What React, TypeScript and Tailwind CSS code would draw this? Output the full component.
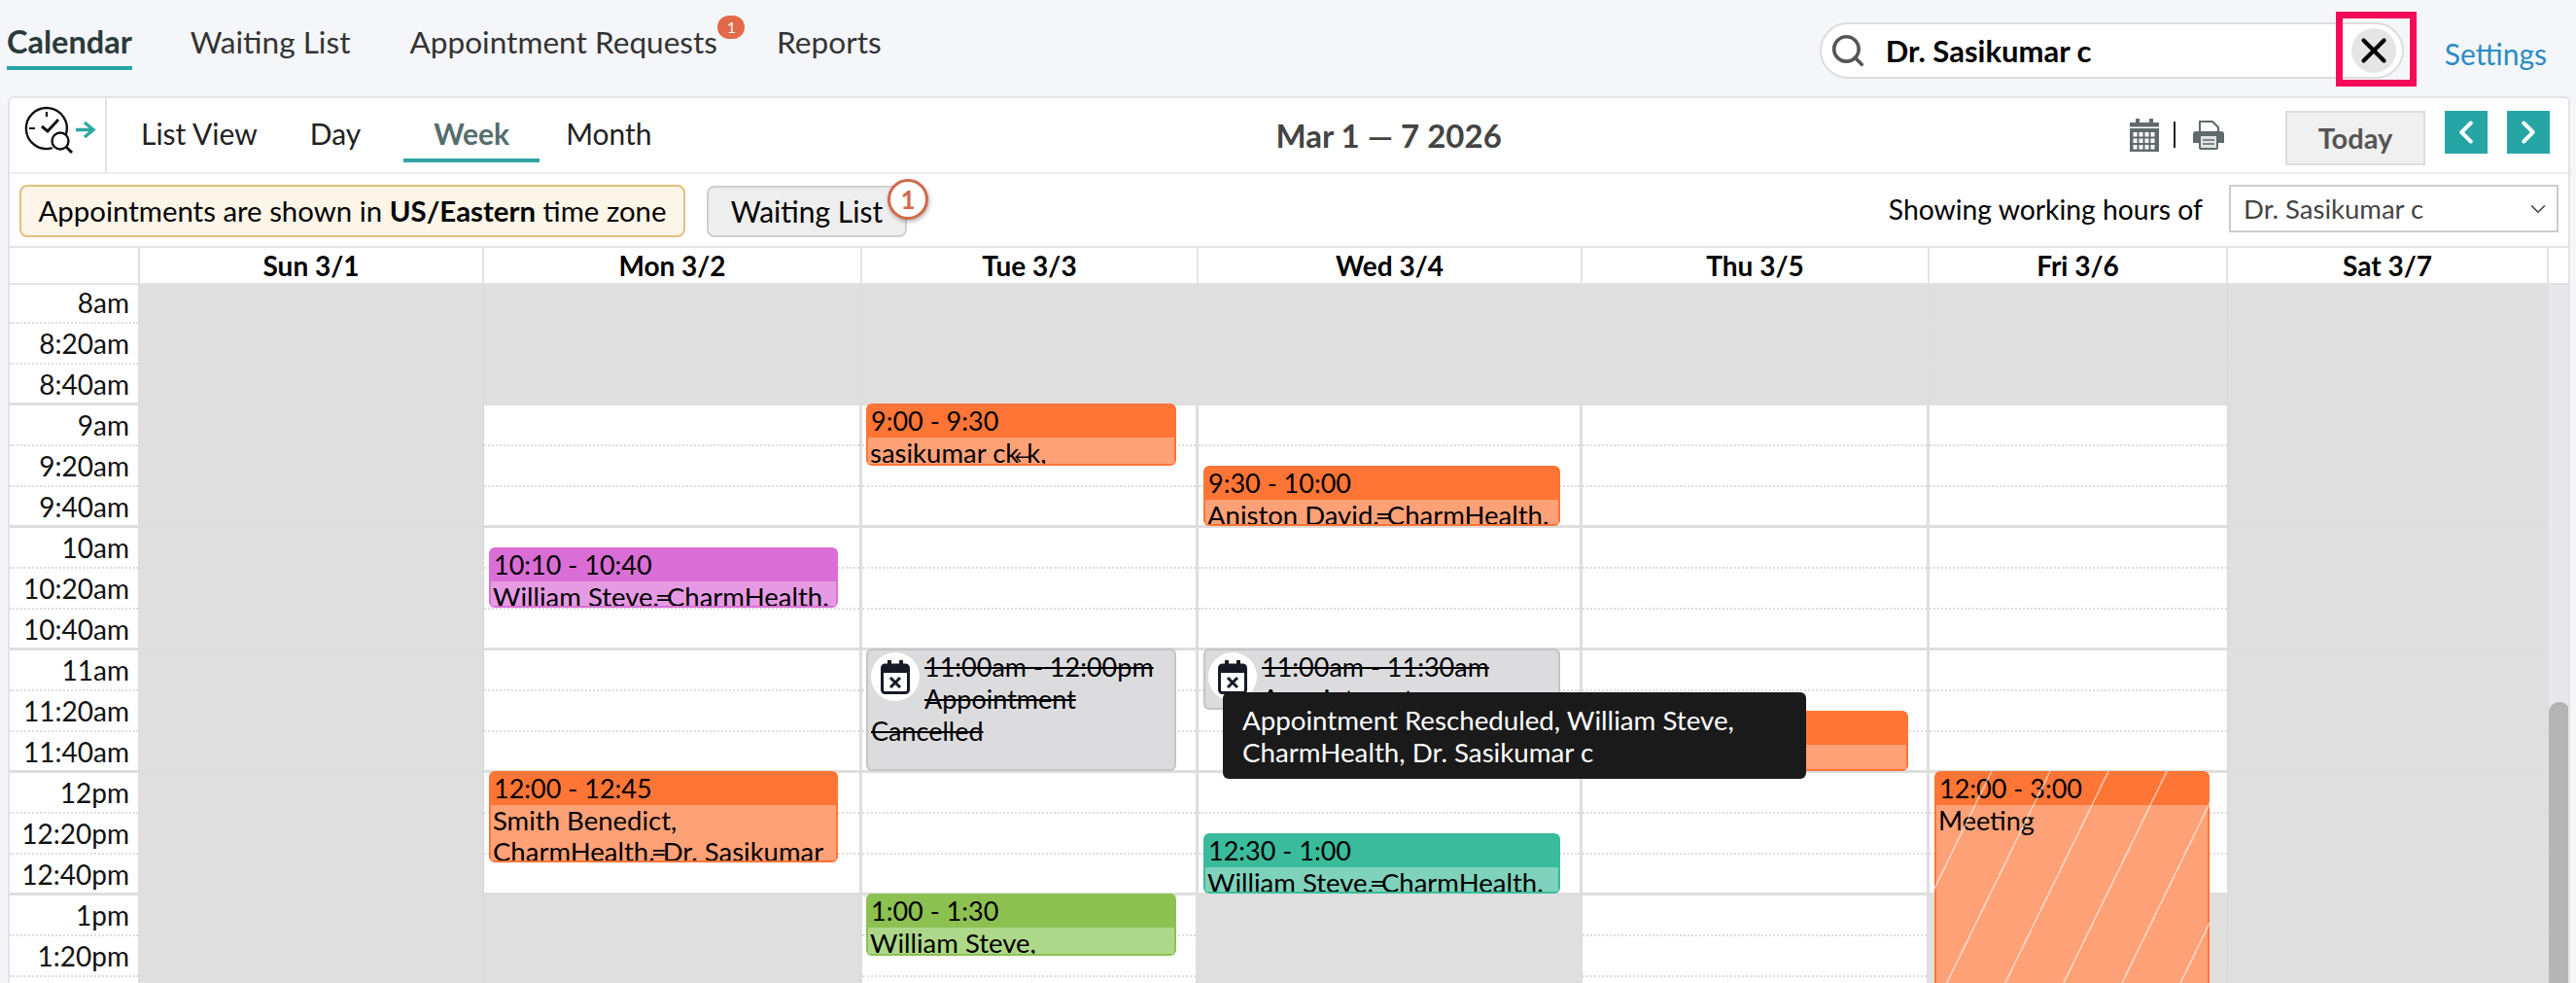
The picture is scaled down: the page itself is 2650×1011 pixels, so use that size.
import React from "react";
import { ChevronDown, ChevronLeft, ChevronRight, Search, X } from "lucide-react";

const times = ["8am","8:20am","8:40am","9am","9:20am","9:40am","10am","10:20am","10:40am","11am","11:20am","11:40am","12pm","12:20pm","12:40pm","1pm","1:20pm","1:40pm"];

function rowBorder(i: number) {
  return (i + 1) % 3 === 0 ? "border-b-[3px] border-solid border-[#dedede]" : "border-b-2 border-dotted border-[#dddddd]";
}

function TimeColumn() {
  return (
    <div className="w-[134px] shrink-0 border-r-2 border-[#dedede]">
      {times.map((t, i) => (
        <div key={t} className={`h-[42px] pr-[9px] text-right text-[28px] leading-[41px] text-[#111] ${rowBorder(i)}`}>{t}</div>
      ))}
    </div>
  );
}

function DayColumn({ className, grayAfter, allGray, children }: { className: string; grayAfter?: boolean; allGray?: boolean; children?: React.ReactNode }) {
  return (
    <div className={`relative shrink-0 ${className}`}>
      {times.map((t, i) => {
        const gray = allGray || i < 3 || (grayAfter && i >= 15);
        return <div key={t} className={`h-[42px] ${gray ? "bg-[#dfdfdf]" : "bg-white"} ${rowBorder(i)}`} />;
      })}
      {children}
    </div>
  );
}

function Appt({ className, head, body, time, children }: { className: string; head: string; body: string; time?: string; children?: React.ReactNode }) {
  return (
    <div className={`absolute flex flex-col overflow-hidden rounded-[6px] px-[2px] pb-[2px] text-black ${head} ${className}`}>
      <div className="h-[35px] shrink-0 pl-[3px] text-[27px] leading-[35px]">{time}</div>
      <div className={`flex-1 overflow-hidden whitespace-nowrap pl-[2px] text-[27.5px] leading-[32px] ${body}`}>{children}</div>
    </div>
  );
}

function Cancelled({ className, time }: { className: string; time: string }) {
  return (
    <div className={`absolute overflow-hidden rounded-[6px] border-2 border-[#c4c4c6] bg-[#dcdcdf] pl-[3px] text-[27px] leading-[33px] text-black line-through ${className}`}>
      <div className="float-left mr-[5px] mt-[2px] flex h-[50px] w-[50px] items-center justify-center rounded-full bg-white">
        <svg width="30" height="35" viewBox="0 0 30 35" fill="none">
          <rect x="1.5" y="5" width="27" height="28.5" rx="3" stroke="#151a25" strokeWidth="3" />
          <rect x="1.5" y="5" width="27" height="8" fill="#151a25" />
          <rect x="7" y="0" width="4" height="8" fill="#151a25" />
          <rect x="19" y="0" width="4" height="8" fill="#151a25" />
          <path d="M10 18 L20 28 M20 18 L10 28" stroke="#151a25" strokeWidth="3" />
        </svg>
      </div>
      {time}
      <br />
      Appointment
      <br />
      Cancelled
    </div>
  );
}

function ClockIcon() {
  return (
    <svg width="99" height="76" viewBox="0 0 99 76" fill="none">
      <path d="M43 51.4 A21 21 0 1 1 58 37" stroke="#111" strokeWidth="2.4" strokeLinecap="round" />
      <path d="M38 14 V19 M20 31 H26" stroke="#111" strokeWidth="2.2" />
      <path d="M33 29 L39 34 L50 22" stroke="#111" strokeWidth="3" />
      <circle cx="52" cy="44" r="8.5" stroke="#111" strokeWidth="2.4" />
      <path d="M58 50 L64 56" stroke="#111" strokeWidth="3" />
      <path d="M68 32.5 H85 M77 25 L86 32.5 L77 40" stroke="#2ea8a2" strokeWidth="3.4" />
    </svg>
  );
}

function CalendarIcon() {
  const cells: React.ReactNode[] = [];
  for (let r = 0; r < 3; r++) for (let c = 0; c < 4; c++) cells.push(<rect key={`${r}-${c}`} x={3.5 + c * 6} y={14 + r * 6.5} width="4" height="4.5" fill="#fff" />);
  return (
    <svg width="30" height="34" viewBox="0 0 30 34">
      <rect x="0" y="4" width="30" height="30" fill="#5f6b6b" />
      <rect x="6" y="0" width="4" height="8" fill="#5f6b6b" />
      <rect x="20" y="0" width="4" height="8" fill="#5f6b6b" />
      <rect x="0" y="8.5" width="30" height="1.5" fill="#fff" />
      {cells}
    </svg>
  );
}

function PrinterIcon() {
  return (
    <svg width="32" height="30" viewBox="0 0 32 30">
      <path d="M7 1 H20 L26 7 V14 H7 Z" fill="#fff" stroke="#5f6b6b" strokeWidth="2" />
      <path d="M3 11 H29 A3 3 0 0 1 32 14 V23 H26 V16 H6 V23 H0 V14 A3 3 0 0 1 3 11 Z" fill="#5f6b6b" />
      <rect x="7" y="15" width="18" height="14" rx="1" fill="#dfe3e3" stroke="#5f6b6b" strokeWidth="2" />
      <path d="M10 20 H22 M10 24 H22" stroke="#5f6b6b" strokeWidth="1.6" />
    </svg>
  );
}

export default function App() {
  return (
    <div className="h-[1011px] w-[2650px] overflow-hidden bg-[#f4f6fa] font-['Lato',sans-serif] text-[#111]">
      {/* top bar */}
      <div className="flex h-[99px] text-[31.6px] text-[#333]">
        <div className="ml-[7px] mt-[21px] h-[51px] border-b-4 border-[#26a5a5] text-[32.5px] font-bold leading-[44px] text-[#2b3a3a]">Calendar</div>
        <div className="ml-[60px] mt-[21px] leading-[44px]">Waiting List</div>
        <div className="relative ml-[61px] mt-[21px] leading-[44px]">
          Appointment Requests
          <span className="absolute left-[317px] top-[-5px] flex h-[24px] w-[28px] items-center justify-center rounded-full bg-[#e2694a] text-[16px] leading-none text-white">1</span>
        </div>
        <div className="ml-[61px] mt-[21px] leading-[44px]">Reports</div>
        <div className="relative ml-auto mt-[23px] flex h-[58px] w-[601px] items-center rounded-full border-2 border-[#dddddd] bg-white pl-[8px]">
          <Search size={38} strokeWidth={2.3} color="#555" />
          <span className="ml-[20px] text-[31px] font-bold text-black">Dr. Sasikumar c</span>
          <span className="ml-auto mr-[6px] flex h-[46px] w-[46px] items-center justify-center rounded-full bg-[#e5e5e5]">
            <X size={42} strokeWidth={2.4} color="#000" className="shrink-0" />
          </span>
          <div className="absolute left-[529px] top-[-13px] h-[77px] w-[83px] border-[7px] border-[#f50a5a]" />
        </div>
        <a className="ml-[42px] mr-[30px] mt-[33px] text-[30px] leading-[44px] text-[#2a8cc4]">Settings</a>
      </div>

      {/* panel */}
      <div className="ml-[8px] h-[912px] w-[2636px] overflow-hidden rounded-t-[6px] border-x-2 border-t-2 border-[#e3e3e3] bg-white">
        {/* view toolbar */}
        <div className="flex h-[78px] items-start border-b-2 border-[#eeeeee] text-[30px] text-[#222]">
          <div className="h-[76px] w-[100px] shrink-0 border-r-2 border-[#e3e3e3]">
            <ClockIcon />
          </div>
          <span className="ml-[35px] mt-[14px]">List View</span>
          <span className="ml-[54px] mt-[14px]">Day</span>
          <span className="ml-[44px] mt-[14px] h-[52px] w-[140px] border-b-4 border-[#2fa4a4] text-center font-bold text-[#566e6c]">Week</span>
          <span className="ml-[27px] mt-[14px]">Month</span>
          <span className="ml-[258px] mt-[14px] w-[1000px] text-center text-[33px] font-bold text-[#444]">Mar 1 — 7 2026</span>
          <div className="ml-auto flex items-start">
            <div className="mt-[21px]"><CalendarIcon /></div>
            <div className="ml-[15px] mt-[24px] h-[27px] w-[2px] bg-[#222]" />
            <div className="ml-[18px] mt-[23px]"><PrinterIcon /></div>
            <div className="ml-[63px] mt-[13px] flex h-[56px] w-[144px] items-center justify-center border-2 border-[#dddddd] bg-[#f0f0f0] text-[29px] font-bold text-[#555]">Today</div>
            <div className="ml-[20px] mt-[13px] flex h-[44px] w-[44px] items-center justify-center bg-[#26a5a5]"><ChevronLeft size={38} strokeWidth={2.5} color="#fff" /></div>
            <div className="ml-[20px] mr-[19px] mt-[13px] flex h-[44px] w-[44px] items-center justify-center bg-[#26a5a5]"><ChevronRight size={38} strokeWidth={2.5} color="#fff" /></div>
          </div>
        </div>

        {/* notice row */}
        <div className="flex h-[76px] items-start border-b-2 border-[#e3e3e3] text-[30px]">
          <div className="ml-[10px] mt-[11px] flex h-[54px] w-[685px] items-center justify-center rounded-[8px] border-2 border-[#e3c07a] bg-[#fdf6e8] text-[29.4px] text-black">
            <span>Appointments are shown in <b>US/Eastern</b> time zone</span>
          </div>
          <div className="relative ml-[22px] mt-[12px] flex h-[53px] w-[206px] items-center justify-center rounded-[8px] border-2 border-[#cfcfcf] bg-[#eeeeee] text-black">
            Waiting List
            <span className="absolute left-[184px] top-[-9px] flex h-[42px] w-[42px] items-center justify-center rounded-full border-[3px] border-[#d2694a] bg-white text-[26px] font-bold text-[#d2694a] shadow-[1px_2px_4px_rgba(0,0,0,0.3)]">1</span>
          </div>
          <span className="ml-auto mt-[15px] text-[28.3px] text-black">Showing working hours of</span>
          <div className="ml-[27px] mr-[10px] mt-[11px] flex h-[49px] w-[339px] items-center justify-between border-2 border-[#cccccc] pl-[13px] pr-[6px] text-[27.5px] text-[#444]">
            Dr. Sasikumar c
            <ChevronDown size={26} strokeWidth={1.5} color="#444" />
          </div>
        </div>

        {/* header */}
        <div className="flex h-[38px] border-b-2 border-[#e3e3e3] text-center text-[28px] font-bold leading-[36px] text-black">
          <div className="w-[134px] shrink-0 border-r-2 border-[#dedede]" />
          <div className="w-[354px] shrink-0 border-r-2 border-[#e3e3e3]">Sun 3/1</div>
          <div className="w-[389px] shrink-0 border-r-2 border-[#e3e3e3]">Mon 3/2</div>
          <div className="w-[346px] shrink-0 border-r-2 border-[#e3e3e3]">Tue 3/3</div>
          <div className="w-[395px] shrink-0 border-r-2 border-[#e3e3e3]">Wed 3/4</div>
          <div className="w-[357px] shrink-0 border-r-2 border-[#e3e3e3]">Thu 3/5</div>
          <div className="w-[307px] shrink-0 border-r-2 border-[#e3e3e3]">Fri 3/6</div>
          <div className="w-[330px] shrink-0 border-r-2 border-[#e3e3e3]">Sat 3/7</div>
        </div>

        {/* grid */}
        <div className="relative h-[720px] overflow-hidden">
          <div className="-mt-[2px] flex">
            <TimeColumn />
            <DayColumn className="w-[354px] border-r border-[#d8d8d8]" allGray />
            <DayColumn className="w-[389px] border-r-[3px] border-[#dedede]" grayAfter>
              <Appt className="left-[5px] top-[272px] h-[62px] w-[359px]" head="bg-[#da6ed6]" body="bg-[#e69ae3]" time="10:10 - 10:40">
                William Steve.<span className="-mx-[4px]">=</span>CharmHealth.
              </Appt>
              <Appt className="left-[5px] top-[502px] h-[94px] w-[359px]" head="bg-[#ff7535]" body="bg-[#ffa177]" time="12:00 - 12:45">
                Smith Benedict,<br />CharmHealth.<span className="-mx-[4px]">=</span>Dr. Sasikumar
              </Appt>
            </DayColumn>
            <DayColumn className="w-[346px] border-r-[3px] border-[#dedede]">
              <Appt className="left-[4px] top-[124px] h-[64px] w-[319px]" head="bg-[#ff7535]" body="bg-[#ffa177]" time="9:00 - 9:30">
                sasikumar ck<span className="-mx-[5px] text-[18px]">←</span>k,
              </Appt>
              <Cancelled className="left-[4px] top-[376px] h-[126px] w-[319px]" time="11:00am - 12:00pm" />
              <Appt className="left-[4px] top-[628px] h-[64px] w-[319px]" head="bg-[#8cc152]" body="bg-[#aed889]" time="1:00 - 1:30">
                William Steve,
              </Appt>
            </DayColumn>
            <DayColumn className="w-[395px] border-r-[3px] border-[#dedede]" grayAfter>
              <Appt className="left-[5px] top-[188px] h-[62px] w-[367px]" head="bg-[#ff7535]" body="bg-[#ffa177]" time="9:30 - 10:00">
                Aniston David.<span className="-mx-[4px]">=</span>CharmHealth.
              </Appt>
              <Cancelled className="left-[5px] top-[376px] h-[63px] w-[367px]" time="11:00am - 11:30am" />
              <Appt className="left-[5px] top-[566px] h-[62px] w-[367px]" head="bg-[#3abc9c]" body="bg-[#7fd2bb]" time="12:30 - 1:00">
                William Steve.<span className="-mx-[4px]">=</span>CharmHealth.
              </Appt>
            </DayColumn>
            <DayColumn className="w-[357px] border-r-[3px] border-[#dedede]">
              <Appt className="left-[5px] top-[440px] h-[62px] w-[330px]" head="bg-[#ff7535]" body="bg-[#ffa177]" />
            </DayColumn>
            <DayColumn className="w-[307px] border-r border-[#d8d8d8]" grayAfter>
              <div className="absolute left-[5px] top-[502px] h-[300px] w-[283px] overflow-hidden rounded-t-[6px] bg-[#ff7535] px-[2px] text-[27px] text-black">
                <div className="h-[35px] pl-[3px] leading-[35px]">12:00 - 3:00</div>
                <div className="h-[265px] bg-[#ffa177] pl-[2px] leading-[32px]">Meeting</div>
                <div className="absolute inset-0 bg-[repeating-linear-gradient(116deg,transparent_0,transparent_52px,rgba(255,255,255,0.45)_52px,rgba(255,255,255,0.45)_54px)]" />
              </div>
            </DayColumn>
            <DayColumn className="w-[330px]" allGray />
            <div className="relative w-[22px] shrink-0 bg-[#e8e8ec]">
              <div className="absolute left-0 top-[431px] h-[400px] w-[22px] rounded-t-full bg-[#b5b5b5]" />
            </div>
          </div>

          <div className="absolute left-[1248px] top-[419px] flex h-[89px] w-[600px] items-center rounded-[6px] bg-[#1a1a1a] px-[20px] text-[27.7px] leading-[33px] text-white">
            <span className="whitespace-nowrap">Appointment Rescheduled, William Steve,<br />CharmHealth, Dr. Sasikumar c</span>
          </div>
        </div>
      </div>
    </div>
  );
}
